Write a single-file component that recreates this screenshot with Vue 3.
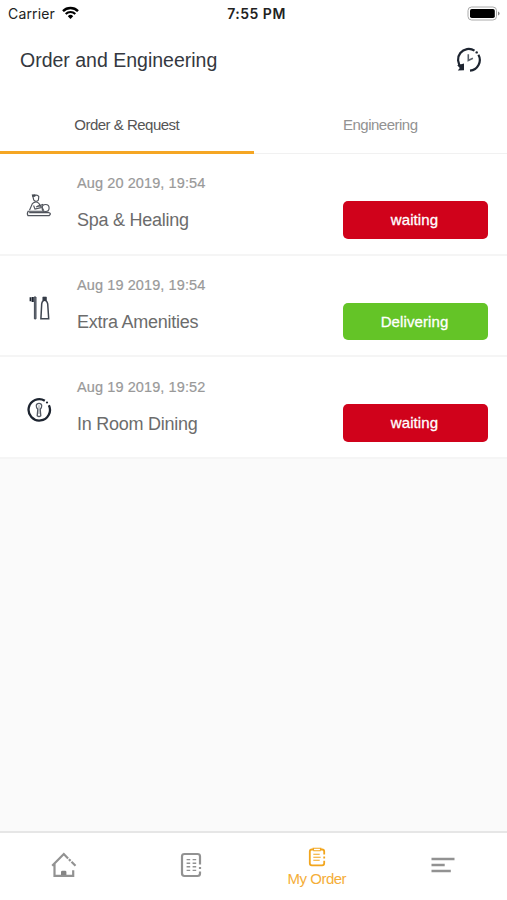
<script setup>
import { ref } from 'vue'

const activeTab = ref('order')

const orders = ref([
    { id: 1, icon: 'spa', date: 'Aug 20 2019, 19:54', name: 'Spa & Healing', status: 'waiting' },
    { id: 2, icon: 'amenities', date: 'Aug 19 2019, 19:54', name: 'Extra Amenities', status: 'Delivering' },
    { id: 3, icon: 'dining', date: 'Aug 19 2019, 19:52', name: 'In Room Dining', status: 'waiting' },
])
</script>

<template>
    <div class="screen">
        <div class="status-bar">
            <div class="carrier">
                <span class="carrier-name">Carrier</span>
                <svg class="wifi" viewBox="0 0 17 13">
                    <path d="M1 5.1a10.6 10.6 0 0 1 15 0" fill="none" stroke="#000" stroke-width="2.4" />
                    <path d="M3.7 8a6.8 6.8 0 0 1 9.6 0" fill="none" stroke="#000" stroke-width="2.1" />
                    <path d="M5.8 10.2a3.8 3.8 0 0 1 5.4 0L8.5 13z" />
                </svg>
            </div>
            <span class="time">7:55 PM</span>
            <svg class="battery" viewBox="0 0 34 15">
                <rect x="1" y="1" width="28.5" height="13" rx="3.6" fill="#fff" stroke="#aaa" />
                <rect x="3" y="3" width="24.8" height="9" rx="1.8" />
                <path d="M31 5.5q1.6.6 1.6 2t-1.6 2z" fill="#888" />
            </svg>
        </div>

        <header class="header">
            <h1>Order and Engineering</h1>
            <svg class="history" viewBox="0 0 26 26">
                <g fill="none" stroke="#1d2430" stroke-width="2.2">
                    <path d="M5.4 20.4A10.7 10.7 0 0 1 18.5 3.6" />
                    <path d="M22.4 7.7A10.7 10.7 0 0 1 14 23.6" />
                    <path d="M12.3 7.2v6.3l4.6-2.3" stroke="#59606a" stroke-width="1.6" />
                </g>
                <circle cx="20.7" cy="5.4" r="1.2" fill="#1d2430" />
                <path d="M1.2 18.2l6.8-1.8v6.8l-6.2.3 2-2.6z" fill="#1d2430" />
            </svg>
        </header>

        <nav class="tabs">
            <button class="tab" :class="{ active: activeTab === 'order' }" @click="activeTab = 'order'">
                Order &amp; Request
            </button>
            <button class="tab" :class="{ active: activeTab === 'engineering' }" @click="activeTab = 'engineering'">
                Engineering
            </button>
        </nav>

        <main class="orders">
            <div v-for="order in orders" :key="order.id" class="order">
                <!-- massage table -->
                <svg v-if="order.icon === 'spa'" class="order-icon" viewBox="0 0 26 26">
                    <g fill="none" stroke="#50545c" stroke-width="1.15">
                        <path d="M6.8 3.2q4.5-2.2 6 .4l-.4 3.5q-2.2 2.3-4.6 0z" />
                        <path d="M3.5 17.2l2.9-6.6q3.5-3.2 6.4-.3l1.7 2.8M7.6 12.5l1.4 3.6 5.9-1.5M10 14l7.2-2.6" />
                        <circle cx="19.6" cy="15" r="3.5" />
                        <path d="M11 13.4q4-2.3 6.5 3.6M1.8 18.2H18" />
                        <path d="M2.4 18.2q-1.8 2.4-.4 4.4h21q2.8-1.9-.3-3.1H3.2" stroke-width="1.3" />
                    </g>
                    <path d="M5.7 1.5l3.6-.3v2.6H6.3z" fill="#444951" />
                </svg>
                <!-- toothbrush and bottle -->
                <svg v-else-if="order.icon === 'amenities'" class="order-icon" viewBox="0 0 26 26">
                    <path d="M3.6 2.2h1.6v4H3.6zM5.6 2h2.2v5H5.6z" fill="#1d2430" />
                    <path d="M8 2h2v21.9H8.4V7z" fill="#777c84" stroke="#434954" stroke-width="1" />
                    <path d="M17.3 2.8h2.6v2.8q1.5 1.3 1.8 3.3l1 14.9h-7.8l.8-14.9q.1-2 1.6-3.3z" fill="none" stroke="#3f4651" stroke-width="1.5" />
                    <path d="M16.8 1.7h3.6v4.4h-3.6z" fill="#343b46" />
                </svg>
                <svg v-else class="order-icon" viewBox="0 0 26 26">
                    <path d="M22.9 8.2A10.7 10.7 0 1 1 18.8 3.7" fill="none" stroke="#1d2430" stroke-width="2.3" />
                    <circle cx="21" cy="5.5" r="1.1" fill="#1d2430" />
                    <path d="M11.8 12.2Q10.1 10.5 10.3 8.6 10.5 6.4 13 6.4t2.7 2.2q.2 1.9-1.5 3.6l.6 6.5q-1.8 1.6-3.6 0z" fill="none" stroke="#535964" stroke-width="1.3" />
                    <path d="M13 8.2V17" stroke="#888e96" stroke-width=".9" />
                </svg>

                <div class="order-info">
                    <p class="order-date">{{ order.date }}</p>
                    <p class="order-name">{{ order.name }}</p>
                </div>
                <div class="order-status" :class="order.status.toLowerCase()">{{ order.status }}</div>
            </div>
        </main>

        <footer class="bottom-nav">
            <div class="nav-item">
                <svg class="home-icon" viewBox="0 0 26 26" fill="none" stroke="#929292" stroke-width="2.2">
                    <path d="M1.2 13.8L12.8 2l4.3 4.4M3.5 12v11.9h18.7v-5.6" />
                    <path d="M17.9 7.2l1.7 1.7M20.5 9.8l4 4" />
                    <path d="M10 23v-2.9q0-1.4 1.4-1.4h2.6q1.4 0 1.4 1.4V23z" fill="#858585" stroke="none" />
                </svg>
            </div>
            <div class="nav-item">
                <svg class="list-icon" viewBox="0 0 22 26" fill="none" stroke="#929292" stroke-width="2.2">
                    <path d="M20 12.6V4.5Q20 2 17.5 2h-13Q2 2 2 4.5v16.8Q2 24 4.5 24h13q2.5 0 2.5-2.5v-2M20 15v2" />
                    <path d="M6.6 7.6h3.6M12.6 7.6h3.6M6.6 11.2h3.6M12.6 11.2h3.6M6.6 14.8h3.6M12.6 14.8h3.6M6.6 18.4h3.6M12.6 18.4h3.6" stroke-width="1.4" />
                </svg>
            </div>
            <div class="nav-item active">
                <svg class="order-nav-icon" viewBox="0 0 18 20" fill="none" stroke="#f2a51d" stroke-width="1.8">
                    <path d="M5 2.5H3.8Q1.8 2.5 1.8 4.5v11.8q0 2 2 2h10.4q2 0 2-2v-2.6M16.2 7.6V4.5q0-2-2-2H13M16.2 9.6v2" />
                    <path d="M5.2 1.3h7.6l-.6 2.5H5.8z" stroke-width="1.1" />
                    <path d="M5.3 7.3h6.4M5.3 10.3h7.4M5.3 13.3h6.4" stroke-width="1.1" />
                </svg>
                <span>My Order</span>
            </div>
            <div class="nav-item">
                <svg class="menu-icon" viewBox="0 0 24 16" stroke="#929292" stroke-width="2.4">
                    <path d="M.5 2h23M.5 8h13.2M.5 14h19.3" />
                </svg>
            </div>
        </footer>
    </div>
</template>

<style>
body {
    margin: 0;
}
</style>

<style scoped>
.screen {
    width: 100%;
    height: 100vh;
    display: flex;
    flex-direction: column;
    overflow: hidden;
    background-color: #fafafa;
    font-family: 'Liberation Sans', Arial, sans-serif;
}

.status-bar {
    height: 28px;
    flex-shrink: 0;
    box-sizing: border-box;
    padding: 0 6px 2px 8px;
    display: grid;
    grid-template-columns: 1fr auto 1fr;
    align-items: center;
    background-color: #fff;
    font-family: Inter, sans-serif;
    font-size: 14px;
    color: #222;
}
.carrier {
    display: flex;
    align-items: center;
    gap: 7px;
}
.carrier-name {
    letter-spacing: 0.15px;
}
.wifi {
    width: 17px;
    height: 13px;
    margin-top: -1px;
}
.time {
    padding-left: 4px;
    font-weight: 600;
    letter-spacing: 0.5px;
}
.battery {
    width: 34px;
    height: 15px;
    justify-self: end;
}

.header {
    height: 68px;
    flex-shrink: 0;
    box-sizing: border-box;
    padding: 0 25px 4px 20px;
    display: flex;
    align-items: center;
    justify-content: space-between;
    background-color: #fff;
}
.header h1 {
    margin: 0;
    font-size: 19.5px;
    font-weight: normal;
    color: #343840;
}
.history {
    width: 26px;
    height: 26px;
}

.tabs {
    height: 58px;
    flex-shrink: 0;
    box-sizing: border-box;
    display: grid;
    grid-template-columns: 1fr 1fr;
    border-bottom: 1px solid #f1f1f1;
    background-color: #fff;
}
.tab {
    height: 58px;
    padding: 2px 0 0;
    border: none;
    border-bottom: 3px solid transparent;
    background: none;
    font-family: inherit;
    font-size: 15px;
    letter-spacing: -0.5px;
    color: #929292;
}
.tab.active {
    border-bottom-color: #f5a623;
    color: #555;
}

.orders {
    flex: 1;
}
.order {
    height: 101.7px;
    box-sizing: border-box;
    padding: 0 19px 0 26px;
    display: flex;
    align-items: center;
    border-bottom: 2px solid #f5f5f5;
    background-color: #fff;
}
.order-icon {
    width: 26px;
    height: 26px;
    margin-top: 5px;
}
.order-info {
    flex: 1;
    margin-top: -2px;
    margin-left: 25px;
}
.order-info p {
    margin: 0;
}
.order-date {
    font-size: 14.5px;
    line-height: 20px;
    letter-spacing: 0.1px;
    color: #999;
    -webkit-text-stroke: 0.2px #999;
}
.order-name {
    padding-top: 15px;
    font-size: 18px;
    line-height: 24px;
    letter-spacing: -0.25px;
    color: #6c6c6c;
}
.order-status {
    width: 145px;
    height: 37.5px;
    box-sizing: border-box;
    margin-top: 32px;
    padding-right: 2px;
    border-radius: 5px;
    font-size: 15px;
    line-height: 38px;
    letter-spacing: 0.1px;
    text-align: center;
    color: #fff;
    -webkit-text-stroke: 0.3px #fff;
}
.order-status.waiting {
    background-color: #d0021b;
}
.order-status.delivering {
    background-color: #64c427;
}

.bottom-nav {
    height: 69px;
    flex-shrink: 0;
    box-sizing: border-box;
    padding-bottom: 4px;
    display: grid;
    grid-template-columns: repeat(4, 1fr);
    border-top: 2px solid #e6e6e6;
    background-color: #fff;
}
.nav-item {
    display: flex;
    flex-direction: column;
    align-items: center;
    justify-content: center;
}
.nav-item.active {
    padding-top: 6px;
    gap: 2px;
    font-size: 15px;
    line-height: 20px;
    letter-spacing: -0.5px;
    color: #f5ae38;
}
.home-icon {
    width: 26px;
    height: 26px;
    margin-left: 2px;
}
.list-icon {
    width: 22px;
    height: 26px;
    margin-left: 2px;
}
.order-nav-icon {
    width: 18px;
    height: 20px;
}
.menu-icon {
    width: 24px;
    height: 16px;
    margin-right: 1px;
}
</style>
